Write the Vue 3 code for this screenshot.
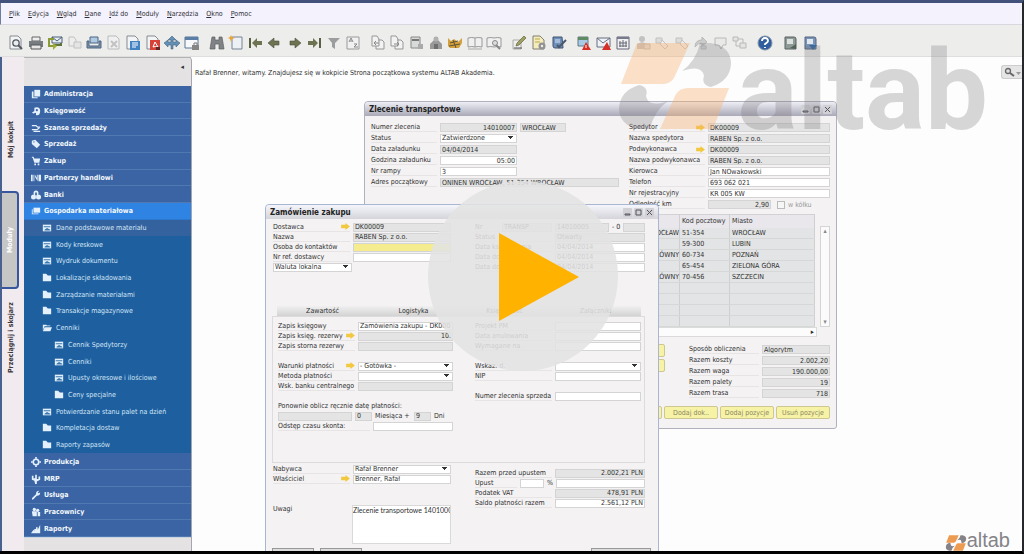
<template>
    <div class="page">
        <nav class="menu-bar" aria-label="Menu">
            <a v-for="item in menu" :key="item" href="#"><u>{{ item[0] }}</u>{{ item.slice(1) }}</a>
        </nav>

        <div class="toolbar">
            <div v-for="(group, g) in toolbar" :key="g" class="tool-group">
                <button v-for="(name, i) in group" :key="i" type="button" class="tool" :class="{ faded: name.startsWith('~') }" :aria-label="name.replace('~', '')">
                    <svg viewBox="0 0 16 16" v-html="icons[name.replace('~', '')]"></svg>
                </button>
            </div>
        </div>

        <div class="workspace">
            <div class="side-tabs">
                <button type="button" class="side-tab tab-cockpit">Mój kokpit</button>
                <button type="button" class="side-tab tab-modules">Moduły</button>
                <button type="button" class="side-tab tab-drag">Przeciągnij i skojarz</button>
            </div>

            <aside class="sidebar">
                <div class="sidebar-head"><button type="button" aria-label="collapse">◂</button></div>
                <ul class="modules">
                    <li v-for="item in modules" :key="item.text" :class="['level-' + item.level, { active: item.active, hover: item.hover }]">
                        <a href="#">
                            <svg viewBox="0 0 12 12" v-html="moduleIcons[item.icon]"></svg>
                            <span>{{ item.text }}</span>
                        </a>
                    </li>
                </ul>
                <div class="sidebar-foot"></div>
            </aside>

            <main class="desktop">
                <div class="welcome">
                    <p>Rafał Brenner, witamy. Znajdujesz się w kokpicie Strona początkowa systemu ALTAB Akademia.</p>
                    <button type="button" class="search" aria-label="search">
                        <svg viewBox="0 0 20 12"><circle cx="6" cy="5" r="2.5" fill="#ddd" stroke="#666" stroke-width="1.3" /><path d="M8 7l4 3" stroke="#666" stroke-width="2" /><path d="M14 6h5l-2.500 3z" fill="#999" /></svg>
                    </button>
                </div>

                <section class="window transport">
                    <header class="title-bar">
                        <h2>Zlecenie transportowe</h2>
                        <div class="window-buttons">
                            <button v-for="b in windowButtons" :key="b.name" type="button" :aria-label="b.name"><svg viewBox="0 0 9 9"><path :d="b.path" /></svg></button>
                        </div>
                    </header>
                    <div class="window-body">
                        <div class="columns">
                            <div class="form"><FormRow v-for="(row, i) in orderLeft" :key="i" v-bind="row" /></div>
                            <div class="form carrier"><FormRow v-for="(row, i) in orderRight" :key="i" v-bind="row" /></div>
                        </div>
                        <div class="stops">
                            <table>
                                <thead>
                                    <tr><th>Nazwa</th><th class="zip">Kod pocztowy</th><th class="city">Miasto</th></tr>
                                </thead>
                                <tbody>
                                    <tr v-for="(stop, i) in stops" :key="i"><td class="name">{{ stop[0] }}</td><td>{{ stop[1] }}</td><td>{{ stop[2] }}</td></tr>
                                </tbody>
                            </table>
                            <div class="scroll-y"><span>▴</span><span>▾</span></div>
                        </div>
                        <div class="scroll-x">▸</div>
                        <div class="summary">
                            <div class="stack">
                                <button type="button" class="yellow" aria-label="up"></button>
                                <button type="button" class="yellow" aria-label="down"></button>
                            </div>
                            <div class="form"><FormRow v-for="(row, i) in orderTotals" :key="i" v-bind="row" /></div>
                        </div>
                        <div class="actions">
                            <button type="button" class="yellow" aria-label="action"></button>
                            <button type="button" class="yellow">Dodaj dok..</button>
                            <button type="button" class="yellow">Dodaj pozycje</button>
                            <button type="button" class="yellow">Usuń pozycje</button>
                        </div>
                    </div>
                </section>

                <section class="window purchase">
                    <header class="title-bar">
                        <h2>Zamówienie zakupu</h2>
                        <div class="window-buttons">
                            <button v-for="b in windowButtons" :key="b.name" type="button" :aria-label="b.name"><svg viewBox="0 0 9 9"><path :d="b.path" /></svg></button>
                        </div>
                    </header>
                    <div class="window-body">
                        <div class="columns head">
                            <div class="form"><FormRow v-for="(row, i) in purchaseLeft" :key="i" v-bind="row" /></div>
                            <div class="form"><FormRow v-for="(row, i) in purchaseRight" :key="i" v-bind="row" /></div>
                        </div>
                        <div class="tabs">
                            <button v-for="tab in tabs" :key="tab" type="button">{{ tab }}</button>
                        </div>
                        <div class="columns panel">
                            <div class="form"><FormRow v-for="(row, i) in panelLeft" :key="i" v-bind="row" /></div>
                            <div class="form"><FormRow v-for="(row, i) in panelRight" :key="i" v-bind="row" /></div>
                        </div>
                        <div class="columns foot">
                            <div class="form">
                                <FormRow v-for="(row, i) in ownerRows" :key="i" v-bind="row" />
                                <div class="notes">
                                    <label for="notes">Uwagi</label>
                                    <textarea id="notes">Zlecenie transportowe 14010007</textarea>
                                </div>
                            </div>
                            <div class="form totals"><FormRow v-for="(row, i) in totals" :key="i" v-bind="row" /></div>
                        </div>
                        <div class="bottom-buttons">
                            <button type="button" aria-label="save"></button>
                            <button type="button" aria-label="cancel"></button>
                            <button type="button" class="last" aria-label="copy"></button>
                        </div>
                    </div>
                </section>

                <div class="brand">
                    <svg viewBox="0 0 118 88"><path v-for="p in logo" :key="p.d + p.t" :d="p.d" :transform="p.t" :fill="p.fill" /></svg>
                    <span>altab</span>
                </div>
            </main>
        </div>

        <div class="watermark">
            <svg viewBox="0 0 118 88"><path v-for="p in logo" :key="p.d + p.t" :d="p.d" :transform="p.t" :fill="p.fill" /></svg>
            <span>altab</span>
        </div>

        <button type="button" class="play" aria-label="play">
            <svg viewBox="0 0 190 190"><path d="M71 52v88l80-44z" fill="#ffb200" /></svg>
        </button>
    </div>
</template>

<script setup>
import { h } from 'vue'

const menu = ['Plik', 'Edycja', 'Wgląd', 'Dane', 'Idź do', 'Moduły', 'Narzędzia', 'Okno', 'Pomoc']

let fieldId = 0

const renderControl = (c, id, label) => {
    const style = c.w ? { flex: `0 0 ${c.w}px` } : null
    const attrs = { id, style, 'aria-label': label || 'pole' }
    if (c.kind === 'note') return h('span', { class: 'note', style }, c.value)
    if (c.kind === 'check') return h('label', { class: 'check' }, [h('input', { type: 'checkbox' }), c.value])
    if (c.kind === 'select') return h('select', { ...attrs, class: 'control select' }, [h('option', c.value)])
    return h('input', { ...attrs, class: ['control', c.kind, { right: c.right }], value: c.value })
}

// label, optional link arrow, then any number of controls
const FormRow = (props) => {
    const id = 'field-' + fieldId++
    const children = []
    if (props.label) {
        children.push(h('label', { class: 'caption', for: id, style: props.lw ? { flex: `0 0 ${props.lw}px` } : null }, [
            h('span', props.label),
            props.arrow ? h('svg', { class: 'arrow', viewBox: '0 0 10 8' }, [h('path', { d: 'M0 2h5V0l5 4-5 4V6H0z' })]) : null
        ]))
    }
    (props.controls || []).forEach((c, i) => children.push(renderControl(c, i === 0 ? id : undefined, props.label)))
    return h('div', { class: 'row' }, children)
}
FormRow.props = ['label', 'arrow', 'lw', 'controls']

const ro = (value = '', opts = {}) => ({ kind: 'ro', value, ...opts })
const edit = (value = '', opts = {}) => ({ kind: 'edit', value, ...opts })
const select = (value = '', opts = {}) => ({ kind: 'select', value, ...opts })
const note = (value, w) => ({ kind: 'note', value, w })

const orderLeft = [
    { label: 'Numer zlecenia', controls: [ro('14010007', { w: 77, right: true }), ro('WROCŁAW', { w: 46 })] },
    { label: 'Status', controls: [select('Zatwierdzone', { w: 77 })] },
    { label: 'Data załadunku', controls: [ro('04/04/2014', { w: 77 })] },
    { label: 'Godzina załadunku', controls: [edit('05:00', { w: 77, right: true })] },
    { label: 'Nr rampy', controls: [edit('3', { w: 77 })] },
    { label: 'Adres początkowy', controls: [ro('ONINEN WROCŁAW, 51-354 WROCŁAW')] }
]

const orderRight = [
    { label: 'Spedytor', arrow: true, controls: [ro('DK00009')] },
    { label: 'Nazwa spedytora', controls: [ro('RABEN Sp. z o.o.')] },
    { label: 'Podwykonawca', arrow: true, controls: [ro('DK00009')] },
    { label: 'Nazwa podwykonawca', controls: [ro('RABEN Sp. z o.o.')] },
    { label: 'Kierowca', controls: [edit('Jan NOwakowski')] },
    { label: 'Telefon', controls: [edit('693 062 021')] },
    { label: 'Nr rejestracyjny', controls: [edit('KR 005 KW')] },
    { label: 'Odległość km', controls: [ro('2,90', { w: 63, right: true }), { kind: 'check', value: 'w kółku' }] }
]

const stops = [
    ['WROCŁAW', '51-354', 'WROCŁAW'],
    ['', '59-300', 'LUBIN'],
    ['GŁÓWNY', '60-734', 'POZNAŃ'],
    ['', '65-454', 'ZIELONA GÓRA'],
    ['GŁÓWNY', '70-456', 'SZCZECIN'],
    ['', '', ''],
    ['', '', ''],
    ['', '', ''],
    ['', '', '']
]

const orderTotals = [
    { label: 'Sposób obliczenia', controls: [ro('Algorytm')] },
    { label: 'Razem koszty', controls: [ro('2.002,20', { right: true })] },
    { label: 'Razem waga', controls: [ro('190.000,00', { right: true })] },
    { label: 'Razem palety', controls: [ro('19', { right: true })] },
    { label: 'Razem trasa', controls: [ro('718', { right: true })] }
]

const purchaseLeft = [
    { label: 'Dostawca', arrow: true, controls: [ro('DK00009')] },
    { label: 'Nazwa', controls: [ro('RABEN Sp. z o.o.')] },
    { label: 'Osoba do kontaktów', controls: [{ kind: 'focus', value: '' }] },
    { label: 'Nr ref. dostawcy', controls: [edit()] },
    { controls: [select('Waluta lokalna', { w: 79 })] }
]

const purchaseRight = [
    { label: 'Nr', lw: 24, controls: [ro('TRANSP', { w: 50 }), ro('14010005', { w: 54 }), note('- 0', 8), ro('')] },
    { label: 'Status', controls: [ro('Otwarty')] },
    { label: 'Data księgowania', controls: [edit('04/04/2014')] },
    { label: 'Data dostawy', controls: [edit('04/04/2014')] },
    { label: 'Data dokumentu', controls: [edit('04/04/2014')] }
]

const tabs = ['Zawartość', 'Logistyka', 'Księgowość', 'Załączniki']

const panelLeft = [
    { label: 'Zapis księgowy', controls: [edit('Zamówienia zakupu - DK000')] },
    { label: 'Zapis księg. rezerwy', arrow: true, controls: [ro('10.', { right: true })] },
    { label: 'Zapis storna rezerwy', controls: [ro()] },
    {},
    { label: 'Warunki płatności', arrow: true, controls: [select('- Gotówka -')] },
    { label: 'Metoda płatności', controls: [select()] },
    { label: 'Wsk. banku centralnego', controls: [ro()] },
    {},
    { controls: [note('Ponownie oblicz ręcznie datę płatności:')] },
    { controls: [ro('', { w: 74 }), ro('0', { w: 17 }), note('Miesiąca +', 36), ro('9', { w: 17 }), note('Dni')] },
    { label: 'Odstęp czasu skonta:', lw: 92, controls: [edit()] }
]

const panelRight = [
    { label: 'Projekt PM', controls: [edit()] },
    { label: 'Data anulowania', controls: [edit()] },
    { label: 'Wymagane na', controls: [edit()] },
    {},
    { label: 'Wskaz. d.', controls: [select()] },
    { label: 'NIP', controls: [edit()] },
    {},
    { label: 'Numer zlecenia sprzeda', controls: [edit()] }
]

const ownerRows = [
    { label: 'Nabywca', controls: [select('Rafał Brenner')] },
    { label: 'Właściciel', arrow: true, controls: [edit('Brenner, Rafał')] }
]

const totals = [
    { label: 'Razem przed upustem', controls: [ro('2.002,21 PLN', { right: true })] },
    { label: 'Upust', lw: 42, controls: [edit('', { w: 24 }), note('%', 5), edit()] },
    { label: 'Podatek VAT', controls: [ro('478,91 PLN', { right: true })] },
    { label: 'Saldo płatności razem', controls: [edit('2.561,12 PLN', { right: true })] }
]

const windowButtons = [
    { name: 'minimize', path: 'M2 6h5v1h-5z' },
    { name: 'maximize', path: 'M2 2h5v5h-5z' },
    { name: 'close', path: 'M2 2l5 5M7 2l-5 5' }
]

const modules = [
    { level: 0, text: 'Administracja', icon: 'docs' },
    { level: 0, text: 'Księgowość', icon: 'ledger' },
    { level: 0, text: 'Szanse sprzedaży', icon: 'chance' },
    { level: 0, text: 'Sprzedaż', icon: 'tag' },
    { level: 0, text: 'Zakup', icon: 'cart' },
    { level: 0, text: 'Partnerzy handlowi', icon: 'partners' },
    { level: 0, text: 'Banki', icon: 'bank' },
    { level: 0, text: 'Gospodarka materiałowa', icon: 'stock', active: true },
    { level: 1, text: 'Dane podstawowe materiału', icon: 'form', hover: true },
    { level: 1, text: 'Kody kreskowe', icon: 'form' },
    { level: 1, text: 'Wydruk dokumentu', icon: 'form' },
    { level: 1, text: 'Lokalizacje składowania', icon: 'folder' },
    { level: 1, text: 'Zarządzanie materiałami', icon: 'folder' },
    { level: 1, text: 'Transakcje magazynowe', icon: 'folder' },
    { level: 1, text: 'Cenniki', icon: 'open' },
    { level: 2, text: 'Cennik Spedytorzy', icon: 'form' },
    { level: 2, text: 'Cenniki', icon: 'form' },
    { level: 2, text: 'Upusty okresowe i ilościowe', icon: 'form' },
    { level: 2, text: 'Ceny specjalne', icon: 'folder' },
    { level: 1, text: 'Potwierdzanie stanu palet na dzień', icon: 'form' },
    { level: 1, text: 'Kompletacja dostaw', icon: 'folder' },
    { level: 1, text: 'Raporty zapasów', icon: 'folder' },
    { level: 0, text: 'Produkcja', icon: 'gear' },
    { level: 0, text: 'MRP', icon: 'mrp' },
    { level: 0, text: 'Usługa', icon: 'wrench' },
    { level: 0, text: 'Pracownicy', icon: 'people' },
    { level: 0, text: 'Raporty', icon: 'chart' }
]

const moduleIcons = {
    docs: '<path d="M4 1h7v8H4z"/><path d="M3 3H1v8h7v-1H3z"/>',
    ledger: '<path d="M4 2q7-2 7 4t-5 5V8L3 9 1 8l3-2z"/><circle cx="7" cy="5" r="1.300" fill="#3a64a3"/>',
    chance: '<path d="M1 3h5l2 2h3M1 8h6l3-2M3 10h8" fill="none" stroke="#e4f0fb" stroke-width="1.500"/>',
    tag: '<path d="M1 2l4-1 6 6-4 4-6-5z"/><circle cx="3.500" cy="3.500" r=".8" fill="#3a64a3"/>',
    cart: '<path d="M1 1h2l1 2h7l-1 5H4L2 2H1zM4 9h2v2H4zM8 9h2v2H8z"/>',
    partners: '<path d="M0 2h2v8H0zM3 2h1v8H3zM5 2l2 4V2h1v8L5 5v5zM9 2h3v8H9z"/>',
    bank: '<circle cx="6" cy="3.500" r="3"/><circle cx="3" cy="8.500" r="3"/><circle cx="9" cy="8.500" r="3"/><path d="M5 3h2v3H5z" fill="#3a64a3"/>',
    stock: '<path d="M3 2h8v6H3z"/><path d="M1 4h1v5h7v1H1z"/>',
    form: '<path d="M1 2h10v8H1z"/><path d="M2 4h8v1H2zM3 8l3-2 4 2v1H3z" fill="#3977ae"/>',
    folder: '<path d="M1 1h4l2 2h4v7H1z"/>',
    open: '<path d="M1 2h4l1 1h4v1H3L1 9z"/><path d="M3 5h9l-2 5H1z"/>',
    gear: '<circle cx="6" cy="6" r="3.300" fill="none" stroke="#e4f0fb" stroke-width="2"/><path d="M5 0h2v2H5zM5 10h2v2H5zM0 5h2v2H0zM10 5h2v2h-2z"/>',
    mrp: '<path d="M1 2h2v3h2V1h2v5h2V3h2v4L7 9v3H5L4 8 1 7z"/>',
    wrench: '<path d="M1 10l5-5q0-4 4-4L8 3l1 1 2-1q0 4-4 4l-5 5z"/>',
    people: '<circle cx="4" cy="3" r="2"/><circle cx="8" cy="4" r="2"/><path d="M1 5h6v6H2zM8 6h3v5H8z"/>',
    chart: '<path d="M0 11l3-4 1 1V6h2v2V4h2v3l3-6v10z"/>'
}

const page = '<path d="M2 1h8l3 3v10H2z" fill="#f3f4f5" stroke="#858b90"/>'
const arrowLeft = '<path d="M1 8l6-5v3h5v4H7v3z" fill="#707352" stroke="#4c503c" stroke-width=".6"/>'
const arrowRight = '<path d="M14 8L8 3v3H3v4h5v3z" fill="#707352" stroke="#4c503c" stroke-width=".6"/>'

const icons = {
    preview: page + '<circle cx="8" cy="8" r="3.200" fill="#e8edf1" stroke="#555b60" stroke-width="1.300"/><path d="M10 10l4 4" stroke="#555b60" stroke-width="2"/>',
    print: '<path d="M4 2h8v4H4z" fill="#eee" stroke="#666"/><path d="M1 6h14v6H1z" fill="#777c80"/><path d="M3 10h10v4H3z" fill="#e6e6e6" stroke="#555"/>',
    mail: '<path d="M5 2h10v6H5z" fill="#e7ecf2" stroke="#4c6079"/><path d="M5 2l5 4 5-4" fill="none" stroke="#4c6079"/><path d="M7 4H2v7h4" fill="none" stroke="#8b9b35" stroke-width="2"/><path d="M7 10h7v-2" fill="none" stroke="#5c7437" stroke-width="2"/><path d="M6 8l4 3-4 4z" fill="#a0ad35"/>',
    copy: '<path d="M2 2h5l2 3v6H2z" fill="#eee" stroke="#999"/><path d="M7 7h7v6H7z" fill="#ddd" stroke="#999"/>',
    fax: '<path d="M4 2h8v6H4z" fill="#aec9e3" stroke="#4d6580"/><path d="M1 6h2v5h10V6h2v7H1z" fill="#8094ac" stroke="#4d6580"/>',
    excel: page + '<path d="M5 6l6 6M11 6l-6 6" stroke="#999" stroke-width="2"/>',
    word: page + '<path d="M5 6h10v9H5z" fill="#4383c4"/><path d="M7 8h6M7 10h6M7 12h4" stroke="#fff"/>',
    pdf: page + '<path d="M5 5h10v10H5z" fill="#d64237"/><path d="M8 12l2-5 3 5q-3-1-5 0" fill="none" stroke="#fff"/><path d="M11 12h4v3h-4z" fill="#642724"/>',
    move: '<path d="M8 1l4 4h-3v2h3V5l4 3-4 4v-2H9v4H7v-4H4v2L0 8l4-3v2h3V5H4z" fill="#6390b6" stroke="#48647c" stroke-width=".6"/>',
    lock: '<path d="M1 2h13v11H1z" fill="#f7f8f9" stroke="#597694"/><path d="M1 2h13v3H1z" fill="#5a7ea5"/><path d="M8 10h7v5H8z" fill="#858585"/><path d="M10 10V8h3v2" fill="none" stroke="#777"/>',
    find: '<path d="M3 2h3v3h4V2h3l2 12h-5V9H6v5H1z" fill="#808386" stroke="#5b5e61" stroke-width=".7"/>',
    create: '<path d="M4 2h10v12H4z" fill="#edf1f6" stroke="#768393"/><path d="M3 0l1 2 3 1-3 1-1 3-1-3-2-1 2-1z" fill="#eba536"/>',
    first: '<path d="M1 3h2v10H1z" fill="#5b5f43"/><path d="M4 8l5-5v3h5v4H9v3z" fill="#707352"/>',
    prev: arrowLeft,
    next: arrowRight,
    last: '<path d="M13 3h2v10h-2z" fill="#5b5f43"/><path d="M12 8L7 3v3H2v4h5v3z" fill="#707352"/>',
    filter: '<path d="M2 3h12L9 8v6l-3-2V8z" fill="#9b9d9e"/>',
    sort: '<path d="M2 2h12v12H2z" fill="#f1f1f1" stroke="#9a9a9a"/><path d="M4 7l2-4 2 4M5 6h2M9 9h3l-3 3h4" fill="none" stroke="#888"/>',
    base: '<path d="M2 1h5l2 3v7H2zM8 5h4l2 2v7H6v-3" fill="#f2f2f2" stroke="#979797"/><path d="M4 8h5M6 6L4 8l2 2" fill="none" stroke="#888"/>',
    target: '<path d="M2 1h5l2 3v7H2zM8 5h4l2 2v7H6v-3" fill="#f2f2f2" stroke="#979797"/><path d="M5 9h5M8 7l2 2-2 2" fill="none" stroke="#888"/>',
    profit: '<path d="M2 2h9v11H2z" fill="#d8d9d9" stroke="#888"/><path d="M3 4h7v2H3z" fill="#777"/><path d="M9 9h5v5H9z" fill="#aaa"/>',
    payment: '<path d="M6 2h4v3l4 4v5H2V9l4-4z" fill="#999"/><circle cx="8" cy="4" r="2.500" fill="#b1b1b1"/><path d="M6 9h4v5H6z" fill="#6f6f6f"/>',
    volume: '<path d="M1 3l3 3 3-2 4 3 4-4v5l-3 5H3L1 11z" fill="#d3a03b"/><path d="M3 8l8-2M2 11l11-2M6 5l3 8" stroke="#5e5339" fill="none"/>',
    book: '<path d="M1 3q4-1 7 0 3-1 7 0v9q-4-1-7 0-3-1-7 0z" fill="#f0f0f0" stroke="#999"/><path d="M8 3v9" stroke="#999"/><path d="M1 14h14" stroke="#aaa"/>',
    bookFind: '<path d="M1 3q4-1 7 0 3-1 7 0v9q-4-1-7 0-3-1-7 0z" fill="#f0f0f0" stroke="#999"/><circle cx="9" cy="8" r="2.500" fill="#ddd" stroke="#888"/><path d="M10 10l4 4" stroke="#888" stroke-width="2"/>',
    pencil: '<path d="M2 5h8v9H2z" fill="#eee" stroke="#aaa"/><path d="M5 11l1-3 7-7 2 2-7 7z" fill="#a0a061" stroke="#666440" stroke-width=".7"/><path d="M3 13h8" stroke="#555"/>',
    settings: '<path d="M2 1h7l4 4v9H2z" fill="#f4ecbd" stroke="#807f70"/><path d="M4 4h5M4 7h5" stroke="#b9a849"/><circle cx="11" cy="11" r="3.500" fill="#929292"/><circle cx="11" cy="11" r="1.200" fill="#eee"/>',
    check: '<path d="M2 2h9l1 11H4q-2 0-2-2z" fill="#6d90bd" stroke="#41536f"/><path d="M4 5h5M4 7h5" stroke="#dae6f3"/><path d="M6 10l2 2 7-7" fill="none" stroke="#4c596b" stroke-width="2"/>',
    alert: '<path d="M2 2h10v9H2z" fill="#a7cbe6" stroke="#637786"/><path d="M2 2h10v3H2z" fill="#5f8b62"/><path d="M10 7l5 8H6z" fill="#d72f27"/><path d="M10 10v3" stroke="#fff"/>',
    mailAlert: '<path d="M1 3h13v9H1z" fill="#f0f1f5" stroke="#666f83"/><path d="M1 3l6 5 7-5" fill="none" stroke="#666f83"/><path d="M11 7l4 8H6z" fill="#d72f27"/>',
    calendar: '<path d="M2 2h12v12H2z" fill="#f0f0f3" stroke="#64677a"/><path d="M2 2h12v2H2z" fill="#777a8b"/><path d="M5 6v6M8 5v7M11 6v6M4 8h8M4 11h8" stroke="#676974"/>',
    person: '<circle cx="7" cy="4" r="3" fill="#999"/><path d="M2 9l5-2 5 2v5H2z" fill="#999"/><path d="M9 9h6v5H9z" fill="#ccc" stroke="#888"/>',
    nodes: '<path d="M2 3h6v5H2z" fill="#ccc" stroke="#999"/><path d="M8 5l6 6-3 3-5-5z" fill="#eee" stroke="#999"/>',
    redo: '<path d="M2 12q0-7 7-7V2l5 5-5 4V8q-4 0-7 4z" fill="#aaa" stroke="#888"/><path d="M8 11h5v3H8z" fill="#ccc" stroke="#999"/>',
    bubble: '<path d="M2 3h11v7h-3l-2 4-2-4H2z" fill="#e6e6e6" stroke="#888"/>',
    tree: '<path d="M1 2h5v4H1zM8 8h6v5H8z" fill="#ddd" stroke="#888"/><path d="M4 6v5h4M6 4h5v4" fill="none" stroke="#888"/>',
    help: '<circle cx="8" cy="8" r="7" fill="#315f9e" stroke="#8493a7"/><path d="M5 6q0-3 3-3t3 3q0 1-3 3v1M8 12v1" fill="none" stroke="#fff" stroke-width="1.800"/>',
    noteGreen: '<path d="M3 2h9q2 0 2 2v10H3z" fill="#8e9a98" stroke="#596360"/><path d="M5 4h6v5H5z" fill="#dce1df"/><path d="M8 13l6-4v5z" fill="#536257"/>',
    noteBlue: '<path d="M3 2h9q2 0 2 2v10H3z" fill="#7894b8" stroke="#52647f"/><path d="M5 4h6v5H5z" fill="#e1e7ef"/><path d="M7 10h8l-4 5z" fill="#2d68a7"/>'
}

const toolbar = [
    ['preview', 'print', 'mail', '~copy', 'fax', '~excel', 'word', 'pdf', 'move', 'lock'],
    ['find', 'create', 'first', 'prev', 'next', 'last', 'filter', 'sort'],
    ['base', 'target', 'profit', 'payment', 'volume', 'book', 'bookFind'],
    ['pencil', 'settings', 'check'],
    ['alert', 'mailAlert', 'calendar', '~person', '~nodes', '~nodes', '~redo', '~bubble', '~tree'],
    ['help'],
    ['noteGreen', 'noteBlue']
]

const orangeShape = 'M21 1H74L58 36Q54 42 46 42H5Z'
const grayShape = 'M84 1H94Q115 4 115 22Q114 39 95 45Q85 43 88 34Q86 22 66 29Q80 19 84 1Z'
const flip = 'rotate(180 59 44)'
const logo = [
    { d: orangeShape, fill: 'var(--logo-orange)' },
    { d: grayShape, fill: 'var(--logo-gray)' },
    { d: orangeShape, fill: 'var(--logo-orange)', t: flip },
    { d: grayShape, fill: 'var(--logo-gray)', t: flip }
]
</script>

<style>
body {
    background: #fdfdfd;
}

button,
input,
select,
textarea {
    box-sizing: border-box;
    margin: 0;
    padding: 0;
    border: 0;
    border-radius: 0;
    font: inherit;
    color: inherit;
}

/* form rows shared by both windows */
.row {
    display: flex;
    align-items: center;
    gap: 3px;
    height: var(--row);
}

.caption {
    display: flex;
    justify-content: space-between;
    align-items: center;
    box-sizing: border-box;
    flex: 0 0 var(--caption);
    height: 9px;
    line-height: 8px;
    border-bottom: 1px solid #e7e4e6;
    white-space: nowrap;
}

.arrow {
    width: 9px;
    height: 7px;
    fill: #f2c83f;
}

.control {
    flex: 1;
    min-width: 0;
    height: 9px;
    padding: 0 1px;
    border: 1px solid #d5d4d5;
    background: #fff;
    line-height: 7px;
}

.control.ro {
    background: #e4e4e4;
}

.control.focus {
    background: #f5ec90;
}

.control.right {
    text-align: right;
}

.control.select {
    appearance: none;
    background: linear-gradient(#333, #333) no-repeat right 4px top 2px / 3px 1px,
        linear-gradient(#333, #333) no-repeat right 3px top 1px / 5px 1px,
        linear-gradient(#333, #333) no-repeat right 5px top 3px / 1px 1px, #fff;
}

.note {
    white-space: nowrap;
}

.check {
    display: flex;
    align-items: center;
    gap: 3px;
    padding-left: 3px;
    color: #999;
}

.check input {
    appearance: none;
    width: 8px;
    height: 8px;
    border: 1px solid #bbb;
    background: #f6f6f6;
}
</style>

<style scoped>
.page {
    position: relative;
    display: flex;
    flex-direction: column;
    box-sizing: border-box;
    height: 100vh;
    overflow: hidden;
    border-top: 3px solid #42527c;
    border-right: 2px solid #26272b;
    border-bottom: 3px solid #000;
    background: #fdfdfd;
    color: #303030;
    font: 7px "DejaVu Sans Condensed", "DejaVu Sans", sans-serif;
}

.menu-bar {
    display: flex;
    align-items: center;
    gap: 8px;
    height: 22px;
    padding-left: 8px;
    border-bottom: 1px solid #d9d8df;
    border-left: 1px solid #6f7ea0;
    box-sizing: border-box;
    background: #f4f2fd;
}

.menu-bar a {
    color: #303038;
    text-decoration: none;
}

.toolbar {
    display: grid;
    grid-template-columns: 192px 152px 132px 56px 172px 16px 36px;
    gap: 9px;
    align-items: center;
    box-sizing: border-box;
    height: 32px;
    padding: 4px 0 0 8px;
    border-bottom: 1px solid #dedede;
    background: #ededec;
}

.tool-group {
    display: flex;
    justify-content: space-between;
}

.tool {
    width: 16px;
    height: 16px;
    background: none;
}

.tool svg {
    display: block;
    width: 16px;
    height: 16px;
}

.tool.faded {
    opacity: 0.5;
}

.workspace {
    display: flex;
    flex: 1;
    min-height: 0;
}

/* vertical tabs on the left edge */
.side-tabs {
    display: flex;
    flex-direction: column;
    box-sizing: border-box;
    flex: 0 0 24px;
    border-left: 2px solid #48618f;
    background: #f1ebef;
}

.side-tab {
    width: 17px;
    writing-mode: vertical-rl;
    transform: rotate(180deg);
    background: none;
    font-weight: bold;
    text-align: center;
    color: #40363c;
}

.tab-cockpit {
    height: 134px;
    padding-bottom: 30px;
}

.tab-modules {
    height: 98px;
    border: 2px solid #3656a0;
    border-right: 0;
    border-radius: 4px 0 0 4px;
    background: #c6c6c7;
    color: #fff;
}

.tab-drag {
    height: 98px;
}

.sidebar {
    display: flex;
    flex-direction: column;
    box-sizing: border-box;
    flex: 0 0 168px;
    border-right: 1px solid #a5a5ab;
    border-radius: 4px 4px 0 0;
    background: #e4e2e3;
}

.sidebar-head {
    display: flex;
    justify-content: flex-end;
    box-sizing: border-box;
    height: 29px;
    padding: 4px 7px;
    border-top: 1px solid #b4b3b4;
}

.sidebar-head button {
    height: 10px;
    background: none;
}

.sidebar-foot {
    height: 13px;
    border-top: 1px solid #c9d4e2;
}

.modules {
    display: flex;
    flex: 1;
    flex-direction: column;
    margin: 0;
    padding: 0;
    list-style: none;
    background: #1d5f9f;
}

.modules li {
    display: flex;
    flex: 1;
    align-items: center;
}

.modules a {
    display: flex;
    align-items: center;
    gap: 3px;
    color: #d5e6f6;
    text-decoration: none;
    white-space: nowrap;
}

.modules svg {
    width: 10px;
    height: 10px;
    fill: #e4f0fb;
}

.level-0 {
    padding-left: 7px;
    background: #3a64a3;
    box-shadow: inset 0 -1px #5079b1;
    font-weight: bold;
}

.level-0 a {
    color: #f3f8fd;
}

.level-0.active {
    background: #2f83e2;
    box-shadow: inset 0 -1px #2d78cf;
}

.level-1 {
    padding-left: 18px;
}

.level-1 a,
.level-2 a {
    gap: 4px;
}

.level-1.hover {
    background: #34629f;
}

.level-2 {
    padding-left: 30px;
}

.desktop {
    position: relative;
    flex: 1;
    overflow: hidden;
}

.welcome {
    display: flex;
    justify-content: space-between;
    align-items: flex-start;
    padding: 8px 0 0 3px;
}

.welcome p {
    margin: 4px 0;
}

.search {
    width: 21px;
    height: 14px;
    border: 1px solid #ccc;
    border-right: 0;
    border-radius: 3px 0 0 3px;
    background: #e5e5e5;
}

.search svg {
    display: block;
}

.window {
    position: absolute;
    box-sizing: border-box;
    border: 1px solid #b1b1be;
    border-radius: 4px 4px 3px 3px;
    background: #f4f2f3;
}

.transport {
    --row: 11px;
    --caption: 66px;
    top: 44px;
    left: 172px;
    width: 473px;
}

.purchase {
    --row: 10px;
    --caption: 77px;
    top: 147px;
    left: 73px;
    width: 394px;
    border-color: #a9b6d2;
}

.title-bar {
    display: flex;
    justify-content: space-between;
    align-items: center;
    height: 14px;
    padding: 0 4px;
    border-radius: 4px 4px 0 0;
    background: linear-gradient(#eeeef6, #a9a9b8);
}

.purchase .title-bar {
    background: linear-gradient(#f5f6fc, #d4d4da);
}

.title-bar h2 {
    margin: 0;
    font-size: 8px;
    color: #222;
}

.window-buttons {
    display: flex;
    gap: 2px;
}

.window-buttons button {
    width: 9px;
    height: 9px;
    border-radius: 1px;
    background: #d0d0d5;
}

.window-buttons svg {
    display: block;
    fill: none;
    stroke: #55555f;
}

.columns {
    display: grid;
}

.form {
    min-width: 0;
}

.transport .window-body {
    padding: 6px 6px 9px;
}

.transport .columns {
    grid-template-columns: 1fr 201px;
    gap: 10px;
}

.carrier {
    --caption: 76px;
}

.stops {
    display: flex;
    gap: 5px;
    margin-top: 4px;
}

.stops table {
    flex: 1;
    width: 100%;
    border: 1px solid #d2d2d4;
    border-collapse: collapse;
    background: #e3e4e5;
    table-layout: fixed;
}

.stops th,
.stops td {
    box-sizing: border-box;
    padding: 0 2px;
    border-right: 1px solid #cfcfcf;
    line-height: 8px;
    white-space: nowrap;
}

.stops th {
    height: 13px;
    background: #e9e7ec;
    font-weight: normal;
    text-align: left;
}

.stops td {
    height: 11px;
    border-bottom: 1px solid #d6d7d7;
}

.stops .name {
    padding: 0;
    text-align: right;
}

.stops .zip {
    width: 50px;
}

.stops .city {
    width: 85px;
}

.scroll-y {
    display: flex;
    flex-direction: column;
    justify-content: space-between;
    align-items: center;
    width: 8px;
    margin-top: 12px;
    border: 1px solid #d5d4d6;
    background: #fbfbfb;
    color: #888;
}

.scroll-x {
    height: 8px;
    margin-right: 13px;
    padding-right: 2px;
    border: 1px solid #dcdbdc;
    background: #fcfcfc;
    line-height: 8px;
    text-align: right;
}

.summary {
    display: flex;
    justify-content: flex-end;
    gap: 24px;
    margin-top: 7px;
}

.summary .form {
    --caption: 70px;
    flex: 0 0 141px;
}

.stack {
    display: flex;
    flex-direction: column;
    gap: 2px;
    width: 60px;
}

.yellow {
    height: 13px;
    border: 1px solid #cfc791;
    border-radius: 2px;
    background: #f6f2a6;
    color: #8b8760;
}

.actions {
    display: flex;
    justify-content: flex-end;
    gap: 2px;
    margin-top: 7px;
}

.actions .yellow {
    width: 54px;
}

.purchase .window-body {
    padding: 3px 7px 4px 6px;
}

.head {
    grid-template-columns: 178px 1fr;
    gap: 24px;
    min-height: 84px;
    padding: 0 6px 0 1px;
}

.tabs {
    display: grid;
    grid-template-columns: repeat(4, 1fr);
    margin: 0 10px 0 5px;
}

.tabs button {
    height: 10px;
    background: linear-gradient(#f0f0f0, #d3d3d3);
    line-height: 9px;
}

.panel {
    grid-template-columns: 175px 1fr;
    gap: 22px;
    box-sizing: border-box;
    min-height: 147px;
    margin-right: 6px;
    padding: 4px 3px 0 5px;
    border: 1px solid #dddbdc;
}

.foot {
    grid-template-columns: 178px 1fr;
    gap: 24px;
    padding: 1px 6px 0 1px;
}

.totals {
    padding-top: 4px;
}

.notes {
    display: flex;
    gap: 3px;
    margin-top: 21px;
}

.notes label {
    flex: 0 0 76px;
}

.notes textarea {
    flex: 1;
    min-width: 0;
    height: 39px;
    overflow: hidden;
    border: 1px solid #dad9da;
    background: #fff;
    font-family: Lato, "Liberation Sans", sans-serif;
    resize: none;
    white-space: nowrap;
}

.bottom-buttons {
    display: flex;
    gap: 6px;
    margin-top: 4px;
}

.bottom-buttons button {
    width: 42px;
    height: 12px;
    border: 1px solid #999;
    background: #ddd;
}

.bottom-buttons .last {
    width: 60px;
    margin-left: auto;
}

.brand {
    --logo-orange: #ec9b50;
    --logo-gray: #858388;
    position: absolute;
    right: 12px;
    bottom: 0;
    display: flex;
    align-items: flex-end;
    font: 20px "Liberation Sans", sans-serif;
    line-height: 22px;
    color: #858388;
}

.brand svg {
    width: 22px;
    height: 16px;
}

.watermark {
    --logo-orange: rgba(246, 176, 110, 0.38);
    --logo-gray: rgba(120, 116, 120, 0.28);
    position: absolute;
    top: 39px;
    right: 34px;
    display: flex;
    align-items: flex-start;
    gap: 4px;
    font: bold 112px Roboto, "Liberation Sans", sans-serif;
    line-height: 98px;
    color: rgba(120, 116, 120, 0.28);
    pointer-events: none;
}

.watermark svg {
    width: 118px;
    height: 88px;
}

.play {
    position: absolute;
    top: 178px;
    left: 428px;
    width: 190px;
    height: 190px;
    border-radius: 50%;
    background: rgba(226, 226, 226, 0.88);
}

.play svg {
    display: block;
}
</style>
